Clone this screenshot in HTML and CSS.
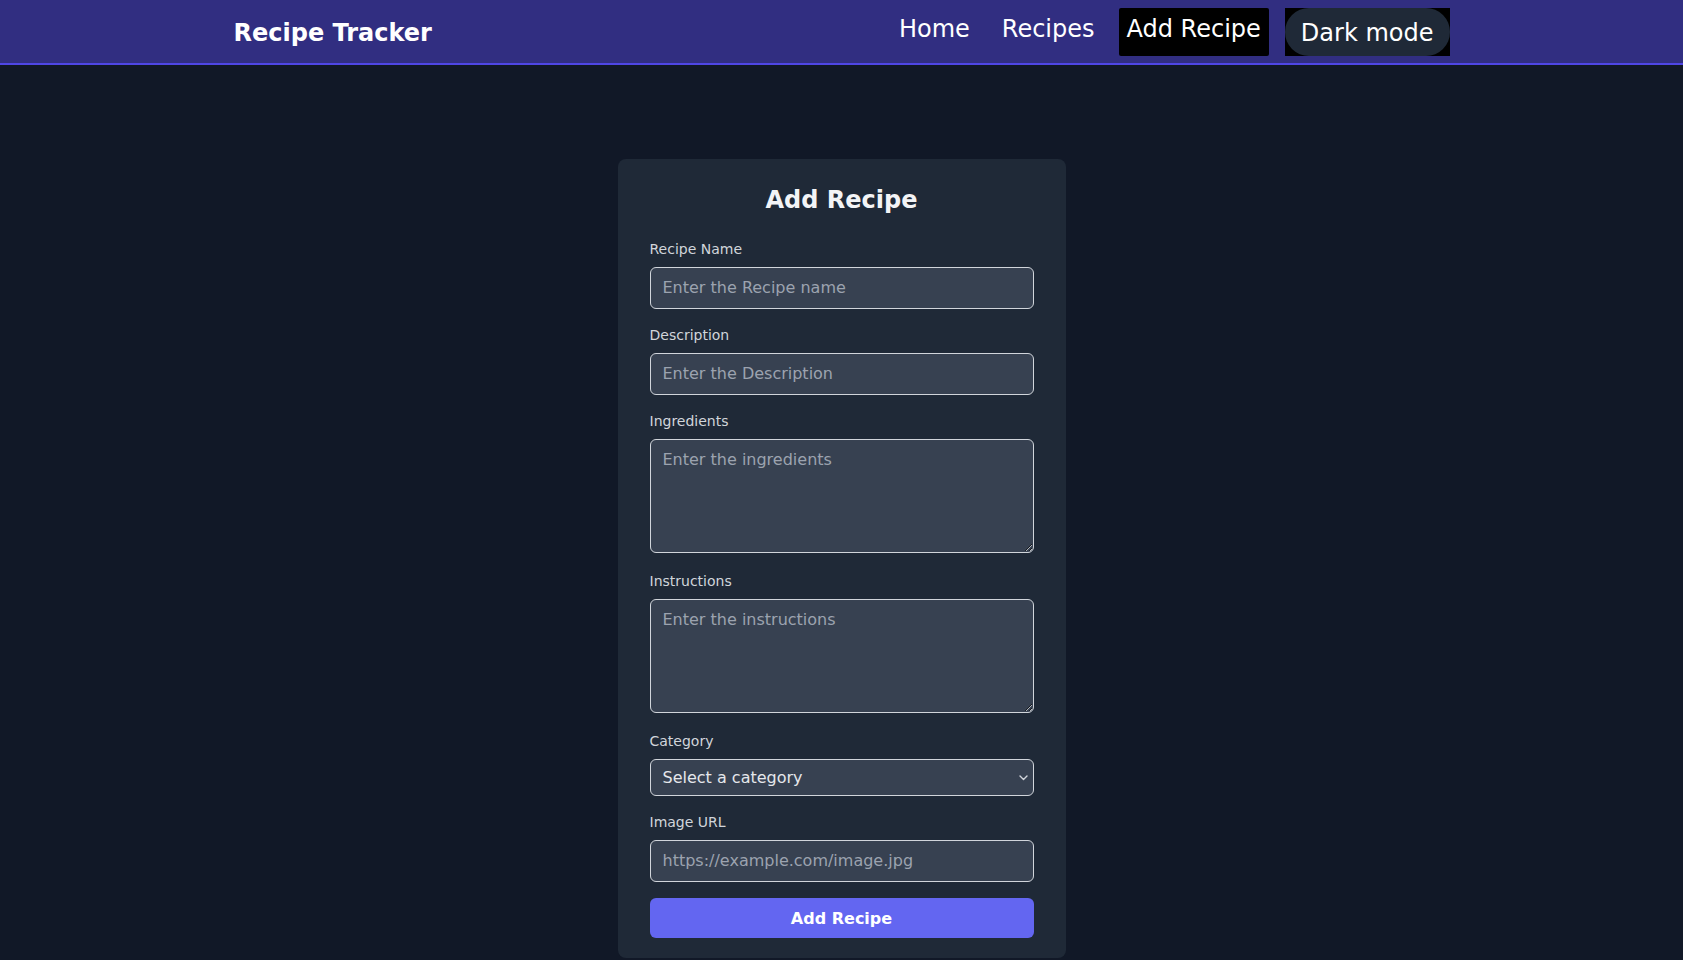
FILE: index.html
```html
<!DOCTYPE html>
<html lang="en">
<head>
<meta charset="utf-8">
<title>Recipe Tracker</title>
<link rel="stylesheet" href="styles.css">
</head>
<body>
<header class="topbar">
  <div class="topbar-inner">
    <a class="brand" href="#">Recipe Tracker</a>
    <nav class="nav">
      <a class="nav-link" href="#">Home</a>
      <a class="nav-link" href="#">Recipes</a>
      <a class="nav-link active" href="#">Add Recipe</a>
      <div class="mode-wrap"><button class="mode-btn" type="button">Dark mode</button></div>
    </nav>
  </div>
</header>
<main class="page">
  <section class="card">
    <h2 class="card-title">Add Recipe</h2>
    <form class="form">
      <div class="field">
        <label class="label" for="name">Recipe Name</label>
        <input class="control" id="name" type="text" placeholder="Enter the Recipe name">
      </div>
      <div class="field">
        <label class="label" for="desc">Description</label>
        <input class="control" id="desc" type="text" placeholder="Enter the Description">
      </div>
      <div class="field field-tall">
        <label class="label" for="ing">Ingredients</label>
        <textarea class="control area" id="ing" rows="4" placeholder="Enter the ingredients"></textarea>
      </div>
      <div class="field field-tall">
        <label class="label" for="ins">Instructions</label>
        <textarea class="control area" id="ins" rows="4" placeholder="Enter the instructions"></textarea>
      </div>
      <div class="field">
        <label class="label" for="cat">Category</label>
        <div class="select-wrap">
          <select class="control select" id="cat">
            <option>Select a category</option>
            <option>Breakfast</option>
            <option>Lunch</option>
            <option>Dinner</option>
            <option>Dessert</option>
          </select>
          <svg class="chevron" width="9" height="6" viewBox="0 0 9 6" aria-hidden="true"><path d="M1 1 L4.5 4.5 L8 1" fill="none" stroke="#d1d5db" stroke-width="1.4" stroke-linecap="round" stroke-linejoin="round"/></svg>
        </div>
      </div>
      <div class="field">
        <label class="label" for="img">Image URL</label>
        <input class="control" id="img" type="text" placeholder="https://example.com/image.jpg">
      </div>
      <button class="submit" type="submit">Add Recipe</button>
    </form>
  </section>
</main>
</body>
</html>
```
FILE: styles.css
```css
* { box-sizing: border-box; }

html, body {
  margin: 0;
  padding: 0;
}

body {
  background: #111827;
  color: #f3f4f6;
  font-family: "DejaVu Sans", sans-serif;
  font-size: 16px;
  line-height: 1.5;
  min-height: 960px;
}

.topbar {
  background: #312e81;
  border-bottom: 2px solid #4f46e5;
  padding: 8px 0 7px;
}

.topbar-inner {
  max-width: 1280px;
  margin: 0 auto;
  padding: 0 32px;
  display: flex;
  align-items: center;
  justify-content: space-between;
  height: 48px;
}

.brand {
  color: #ffffff;
  text-decoration: none;
  font-weight: 700;
  font-size: 24px;
  line-height: 32px;
  padding-top: 2px;
}

.nav {
  display: flex;
  align-items: center;
  gap: 16px;
}

.nav-link {
  display: block;
  color: #ffffff;
  text-decoration: none;
  font-size: 24px;
  line-height: 32px;
  padding: 5px 8px 11px;
  border-radius: 2px;
}

.nav-link.active {
  background: #000000;
}

.mode-wrap {
  background: #000000;
  height: 48px;
  display: flex;
}

.mode-btn {
  background: #1f2937;
  color: #ffffff;
  border: 0;
  border-radius: 24px;
  height: 48px;
  padding: 1px 16px 0;
  font-family: "DejaVu Sans", sans-serif;
  font-size: 24px;
  line-height: 32px;
  cursor: pointer;
}

.page {
  padding-top: 94px;
  display: flex;
  justify-content: center;
}

.card {
  width: 448px;
  background: #1f2937;
  border-radius: 8px;
  padding: 25px 32px 20px;
}

.card-title {
  margin: 0 0 23px;
  text-align: center;
  font-size: 24px;
  line-height: 32px;
  font-weight: 700;
  color: #f3f4f6;
}

.form {
  margin: 0;
}

.field {
  margin-bottom: 16px;
}

.field-tall {
  margin-bottom: 18px;
}

.label {
  display: block;
  font-size: 14px;
  line-height: 20px;
  margin-bottom: 8px;
  color: #d1d5db;
}

.control {
  display: block;
  width: 100%;
  background: #374151;
  color: #e5e7eb;
  border: 1px solid #d1d5db;
  border-radius: 6px;
  padding: 8px 12px;
  font-family: "DejaVu Sans", sans-serif;
  font-size: 16px;
  line-height: 24px;
  margin: 0;
}

.control::placeholder {
  color: #9ca3af;
  opacity: 1;
}

.area {
  height: 114px;
  resize: vertical;
}

.select-wrap {
  position: relative;
}

.select {
  -webkit-appearance: none;
  appearance: none;
  line-height: normal;
  height: 37px;
  padding: 0 24px 0 12px;
  font-weight: 400;
}

.chevron {
  position: absolute;
  right: 6px;
  top: 16px;
  pointer-events: none;
}

.submit {
  display: block;
  width: 100%;
  height: 40px;
  border: 0;
  border-radius: 6px;
  background: #6366f1;
  color: #ffffff;
  font-family: "DejaVu Sans", sans-serif;
  font-size: 16px;
  font-weight: 700;
  cursor: pointer;
}
```
